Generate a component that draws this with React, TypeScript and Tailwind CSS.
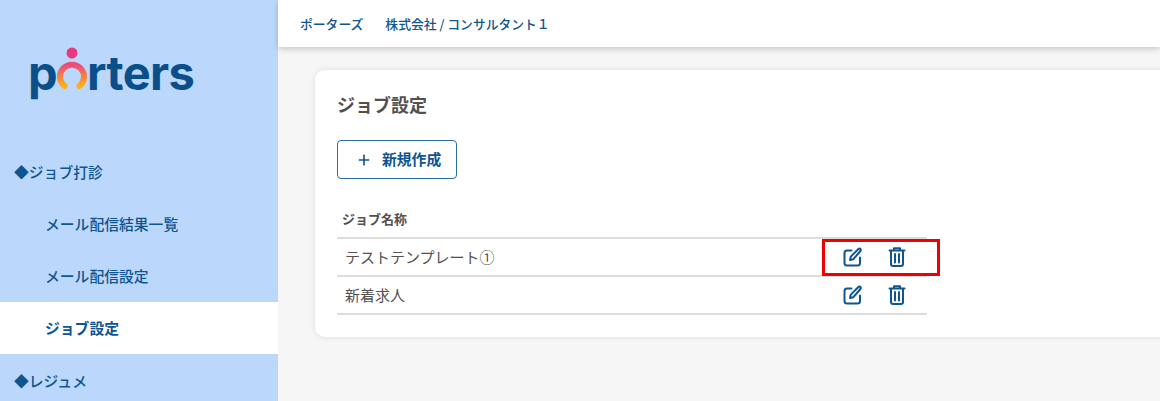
import { Plus } from 'lucide-react';

const font = { fontFamily: '"Noto Sans CJK JP", "Noto Sans", sans-serif' };

function EditIcon() {
  return (
    <svg width="20" height="20" viewBox="0 0 20 20" fill="none" stroke="#0f5590" strokeWidth="2" strokeLinecap="round" strokeLinejoin="round">
      <path d="M8.5 3.5H4a2.5 2.5 0 0 0-2.5 2.5v10A2.5 2.5 0 0 0 4 18.5h10.5a2.5 2.5 0 0 0 2.5-2.5v-5.5" />
      <path d="M7 13l.8-3.4L15.4 2c.6-.6 1.5-.6 2 0 .6.6.6 1.5 0 2L10.4 12.2z" />
    </svg>
  );
}

function TrashIcon() {
  return (
    <svg width="18" height="20" viewBox="0 0 18 20" fill="none" stroke="#0f5590" strokeWidth="2" strokeLinecap="round" strokeLinejoin="round">
      <path d="M1.5 3.5h15" />
      <path d="M6 3V1.2h6V3" />
      <path d="M3 4v13a2 2 0 0 0 2 2h8a2 2 0 0 0 2-2V4" />
      <path d="M7 7v8.5M11 7v8.5" />
    </svg>
  );
}

function Logo() {
  return (
    <div className="flex items-baseline h-[64px] pl-[28px] text-[#0b4f8a] text-[47px] font-bold leading-[64px] tracking-[-0.6px]" style={{ fontFamily: 'Inter, sans-serif' }}>
      <span>p</span>
      <svg width="32" height="50" viewBox="0 0 32 50" fill="none" className="self-end mb-[8px] mx-[-1px]">
        <defs>
          <linearGradient id="ring" x1="0" y1="0" x2="0" y2="1">
            <stop offset="0" stopColor="#ec4a7d" />
            <stop offset="1" stopColor="#fbb117" />
          </linearGradient>
        </defs>
        <circle cx="16" cy="6" r="5.5" fill="#e8387f" />
        <path d="M8.5 39A12 12 0 1 1 23.5 39" stroke="url(#ring)" strokeWidth="6" strokeLinecap="round" />
      </svg>
      <span>rters</span>
    </div>
  );
}

function Row({ name, marked }: { name: string; marked?: boolean }) {
  return (
    <div className="relative flex items-center h-[38px] border-b-2 border-[#dcdcdc] text-[15px] text-[#555050]">
      <span className="flex-1 pl-2">{name}</span>
      <div className="flex items-center gap-[25px] pr-[21px]">
        <EditIcon />
        <TrashIcon />
      </div>
      {marked && <div className="absolute left-[485px] top-0 w-[118px] h-[37px] border-[3px] border-[#f00000]" />}
    </div>
  );
}

export default function App() {
  return (
    <div className="flex h-[401px] w-[1160px] overflow-hidden bg-[#f6f6f6]" style={font}>
      <aside className="w-[278px] shrink-0 bg-[#bbd8fc] text-[#0f5590] text-[14.8px] font-medium">
        <div className="pt-[41px] h-[146px]">
          <Logo />
        </div>
        <div className="h-[52px] flex items-center pl-[14px]">◆ジョブ打診</div>
        <div className="h-[52px] flex items-center pl-[45px]">メール配信結果一覧</div>
        <div className="h-[52px] flex items-center pl-[45px]">メール配信設定</div>
        <div className="h-[52px] flex items-center pl-[45px] bg-white font-bold">ジョブ設定</div>
        <div className="h-[55px] flex items-center pl-[14px]">◆レジュメ</div>
      </aside>
      <div className="flex-1 min-w-0">
        <header className="h-[47px] bg-white shadow-[0_2px_6px_rgba(0,0,0,0.2)] flex items-center gap-[22px] pl-[22px] text-[12.8px] font-medium text-[#0f5590]">
          <span>ポーターズ</span>
          <span>株式会社 / コンサルタント１</span>
        </header>
        <main className="pt-[23px] pl-[37px]">
          <section className="w-[900px] h-[267px] bg-white rounded-[10px] shadow-[0_0_6px_rgba(0,0,0,0.1)] pt-[21px] pl-[22px]">
            <h1 className="text-[18px] font-bold leading-[26px] text-[#555050]">ジョブ設定</h1>
            <button className="mt-[23px] w-[120px] h-[39px] border border-[#2a6ea8] rounded-[4px] flex items-center pl-[18px] gap-[10px] text-[14.8px] font-bold text-[#0f5590]">
              <Plus size={16} strokeWidth={2.5} />
              新規作成
            </button>
            <div className="w-[590px] mt-[21px]">
              <div className="h-[39px] flex items-center pl-[5px] border-b-2 border-[#dcdcdc] text-[13px] font-bold text-[#555050]">ジョブ名称</div>
              <Row name="テストテンプレート①" marked />
              <Row name="新着求人" />
            </div>
          </section>
        </main>
      </div>
    </div>
  );
}
